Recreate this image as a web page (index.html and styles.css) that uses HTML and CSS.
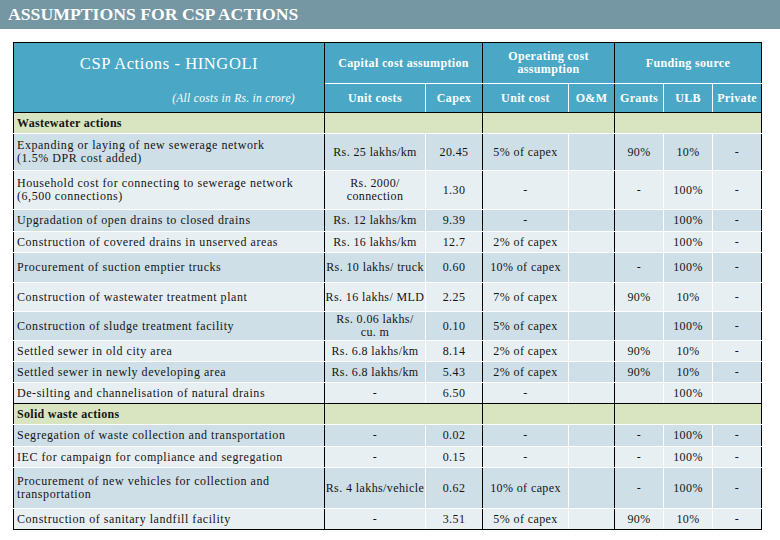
FILE: index.html
```html
<!DOCTYPE html>
<html lang="en">
<head>
<meta charset="utf-8">
<title>Assumptions for CSP actions</title>
<link rel="stylesheet" href="styles.css">
</head>
<body>
<header class="title-bar"><h1>ASSUMPTIONS FOR CSP ACTIONS</h1></header>
<main class="content">
<table class="plan">
<colgroup>
<col class="c-name"><col class="c-unit"><col class="c-capex"><col class="c-ounit"><col class="c-om"><col class="c-fund"><col class="c-fund"><col class="c-fund">
</colgroup>
<thead>
<tr class="head-top">
<th rowspan="2" class="action-head"><span class="place">CSP Actions - HINGOLI</span><span class="unit-note">(All costs in Rs. in crore)</span></th>
<th colspan="2">Capital cost assumption</th>
<th colspan="2">Operating cost<br>assumption</th>
<th colspan="3">Funding source</th>
</tr>
<tr class="head-sub">
<th>Unit costs</th><th>Capex</th><th>Unit cost</th><th>O&amp;M</th><th>Grants</th><th>ULB</th><th>Private</th>
</tr>
</thead>
<tbody>
<tr class="section"><td>Wastewater actions</td><td colspan="2"></td><td colspan="2"></td><td colspan="3"></td></tr>
<tr class="row dark h37"><td>Expanding or laying of new sewerage network<br>(1.5% DPR cost added)</td><td>Rs. 25 lakhs/km</td><td>20.45</td><td>5% of capex</td><td></td><td>90%</td><td>10%</td><td>-</td></tr>
<tr class="row h39"><td>Household cost for connecting to sewerage network<br>(6,500 connections)</td><td>Rs. 2000/<br>connection</td><td>1.30</td><td>-</td><td></td><td>-</td><td>100%</td><td>-</td></tr>
<tr class="row dark h22"><td>Upgradation of open drains to closed drains</td><td>Rs. 12 lakhs/km</td><td>9.39</td><td>-</td><td></td><td></td><td>100%</td><td>-</td></tr>
<tr class="row h21"><td>Construction of covered drains in unserved areas</td><td>Rs. 16 lakhs/km</td><td>12.7</td><td>2% of capex</td><td></td><td></td><td>100%</td><td>-</td></tr>
<tr class="row dark h30"><td>Procurement of suction emptier trucks</td><td>Rs. 10 lakhs/ truck</td><td>0.60</td><td>10% of capex</td><td></td><td>-</td><td>100%</td><td>-</td></tr>
<tr class="row h29"><td>Construction of wastewater treatment plant</td><td>Rs. 16 lakhs/ MLD</td><td>2.25</td><td>7% of capex</td><td></td><td>90%</td><td>10%</td><td>-</td></tr>
<tr class="row dark h29"><td>Construction of sludge treatment facility</td><td>Rs. 0.06 lakhs/<br>cu. m</td><td>0.10</td><td>5% of capex</td><td></td><td></td><td>100%</td><td>-</td></tr>
<tr class="row h21"><td>Settled sewer in old city area</td><td>Rs. 6.8 lakhs/km</td><td>8.14</td><td>2% of capex</td><td></td><td>90%</td><td>10%</td><td>-</td></tr>
<tr class="row dark h21"><td>Settled sewer in newly developing area</td><td>Rs. 6.8 lakhs/km</td><td>5.43</td><td>2% of capex</td><td></td><td>90%</td><td>10%</td><td>-</td></tr>
<tr class="row h21 group-last"><td>De-silting and channelisation of natural drains</td><td>-</td><td>6.50</td><td>-</td><td></td><td></td><td>100%</td><td></td></tr>
<tr class="section"><td>Solid waste actions</td><td colspan="2"></td><td colspan="2"></td><td colspan="3"></td></tr>
<tr class="row dark h22"><td>Segregation of waste collection and transportation</td><td>-</td><td>0.02</td><td>-</td><td></td><td>-</td><td>100%</td><td>-</td></tr>
<tr class="row h21"><td>IEC for campaign for compliance and segregation</td><td>-</td><td>0.15</td><td>-</td><td></td><td>-</td><td>100%</td><td>-</td></tr>
<tr class="row dark h41"><td>Procurement of new vehicles for collection and<br>transportation</td><td>Rs. 4 lakhs/vehicle</td><td>0.62</td><td>10% of capex</td><td></td><td>-</td><td>100%</td><td>-</td></tr>
<tr class="row h21 table-last"><td>Construction of sanitary landfill facility</td><td>-</td><td>3.51</td><td>5% of capex</td><td></td><td>90%</td><td>10%</td><td>-</td></tr>
</tbody>
</table>
</main>
</body>
</html>
```
FILE: styles.css
```css
body {
  margin: 0;
  background: #ffffff;
  font-family: "Liberation Serif", "Times New Roman", serif;
}

.title-bar {
  background: #7596a3;
  height: 29px;
  padding-left: 8px;
}

.title-bar h1 {
  margin: 0;
  font-size: 17.7px;
  line-height: 29px;
  font-weight: bold;
  color: #ffffff;
}

.content {
  padding: 13px 0 0 13px;
}

.plan {
  border-collapse: collapse;
  table-layout: fixed;
  width: 749px;
  font-size: 12px;
  letter-spacing: 0.4px;
  color: #141414;
}

.c-name { width: 311px; }
.c-unit { width: 101px; }
.c-capex { width: 57px; }
.c-ounit { width: 86px; }
.c-om { width: 46px; }
.c-fund { width: 49px; }

.plan th,
.plan td {
  border: 1px solid #ffffff;
  padding: 0;
  text-align: center;
  vertical-align: middle;
  line-height: 13px;
  white-space: nowrap;
}

.plan th {
  background: #4aa8c6;
  color: #ffffff;
  font-weight: bold;
  font-size: 12px;
  letter-spacing: 0.35px;
}

.head-top { height: 41px; }
.head-sub { height: 29px; }

.head-top th {
  border-top-color: #000000;
  border-right-color: #000000;
}

.head-top th + th {
  border-left-color: #000000;
}

.head-sub th {
  border-bottom-color: #000000;
}

.head-sub th:nth-child(2),
.head-sub th:nth-child(4),
.head-sub th:nth-child(7) {
  border-right-color: #000000;
}

.head-sub th:nth-child(3),
.head-sub th:nth-child(5) {
  border-left-color: #000000;
}

.plan .action-head {
  vertical-align: top;
  border-left-color: #000000;
  border-bottom-color: #000000;
  font-weight: normal;
}

.place {
  display: block;
  height: 41px;
  line-height: 41px;
  font-size: 16.5px;
  letter-spacing: 0.6px;
}

.unit-note {
  display: block;
  height: 28px;
  line-height: 28px;
  text-align: right;
  padding-right: 29px;
  font-size: 11.5px;
  font-style: italic;
  letter-spacing: 0.3px;
}

.section {
  height: 21px;
  background: #d9e4c1;
}

.section td {
  border-right-color: #000000;
  border-left-color: #000000;
}

.section td:first-child {
  text-align: left;
  text-indent: 3px;
  font-weight: bold;
  letter-spacing: 0.3px;
}

.head-sub + .section td {
  border-top-color: #000000;
}

.row { background: #e8eff3; }
.row.dark { background: #cfdfe8; }

.h21 { height: 21px; }
.h22 { height: 22px; }
.h29 { height: 29px; }
.h30 { height: 30px; }
.h37 { height: 37px; }
.h39 { height: 39px; }
.h41 { height: 41px; }

.row td:first-child {
  text-align: left;
  padding-left: 3px;
  letter-spacing: 0.55px;
  border-left-color: #000000;
}

.row td:nth-child(1),
.row td:nth-child(3),
.row td:nth-child(5),
.row td:nth-child(8) {
  border-right-color: #000000;
}

.row td:nth-child(2),
.row td:nth-child(4),
.row td:nth-child(6) {
  border-left-color: #000000;
}

.group-last td {
  border-bottom-color: #000000;
}

.group-last + .section td {
  border-top-color: #000000;
}

.table-last td {
  border-bottom-color: #000000;
}
```
